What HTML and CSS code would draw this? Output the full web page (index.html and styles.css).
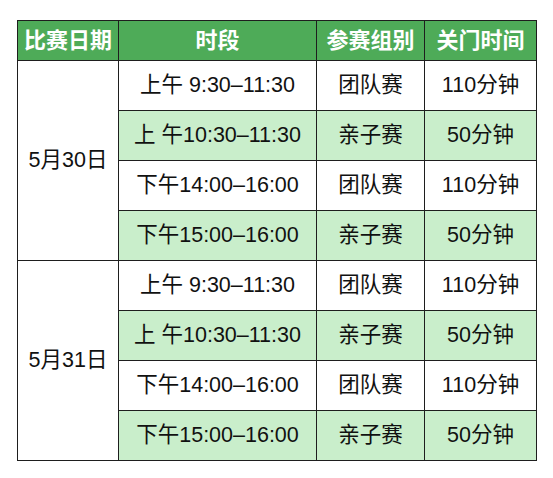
FILE: index.html
```html
<!DOCTYPE html>
<html lang="zh">
<head>
<meta charset="utf-8">
<link rel="stylesheet" href="styles.css">
</head>
<body>
<table class="schedule">
  <colgroup>
    <col class="c-date">
    <col class="c-time">
    <col class="c-group">
    <col class="c-close">
  </colgroup>
  <thead>
    <tr>
      <th>比赛日期</th>
      <th>时段</th>
      <th>参赛组别</th>
      <th>关门时间</th>
    </tr>
  </thead>
  <tbody>
    <tr>
      <td class="date" rowspan="4">5月30日</td>
      <td>上午 9:30–11:30</td>
      <td>团队赛</td>
      <td>110分钟</td>
    </tr>
    <tr class="alt">
      <td>上 午10:30–11:30</td>
      <td>亲子赛</td>
      <td>50分钟</td>
    </tr>
    <tr>
      <td>下午14:00–16:00</td>
      <td>团队赛</td>
      <td>110分钟</td>
    </tr>
    <tr class="alt">
      <td>下午15:00–16:00</td>
      <td>亲子赛</td>
      <td>50分钟</td>
    </tr>
    <tr>
      <td class="date" rowspan="4">5月31日</td>
      <td>上午 9:30–11:30</td>
      <td>团队赛</td>
      <td>110分钟</td>
    </tr>
    <tr class="alt">
      <td>上 午10:30–11:30</td>
      <td>亲子赛</td>
      <td>50分钟</td>
    </tr>
    <tr>
      <td>下午14:00–16:00</td>
      <td>团队赛</td>
      <td>110分钟</td>
    </tr>
    <tr class="alt">
      <td>下午15:00–16:00</td>
      <td>亲子赛</td>
      <td>50分钟</td>
    </tr>
  </tbody>
</table>
</body>
</html>
```

FILE: styles.css
```css
html, body {
  margin: 0;
  padding: 0;
  background: #ffffff;
}

body {
  padding: 20px 0 0 17px;
  font-family: "Liberation Sans", "Noto Sans CJK SC", sans-serif;
  color: #111111;
}

.schedule {
  border-collapse: collapse;
  table-layout: fixed;
  width: 519px;
}

.c-date { width: 101px; }
.c-time { width: 198px; }
.c-group { width: 108px; }
.c-close { width: 112px; }

.schedule th,
.schedule td {
  border: 1.5px solid #1e1e1e;
  text-align: center;
  vertical-align: middle;
  padding: 0;
  white-space: nowrap;
  box-sizing: border-box;
  line-height: 1;
}

.schedule th {
  height: 40px;
  background: #4eab58;
  color: #ffffff;
  font-weight: bold;
  font-size: 22px;
}

.schedule td {
  height: 50px;
  font-size: 21.5px;
  background: #ffffff;
}

.schedule tr.alt td {
  background: #c9eecb;
}

.schedule td.date {
  background: #ffffff;
}
```
